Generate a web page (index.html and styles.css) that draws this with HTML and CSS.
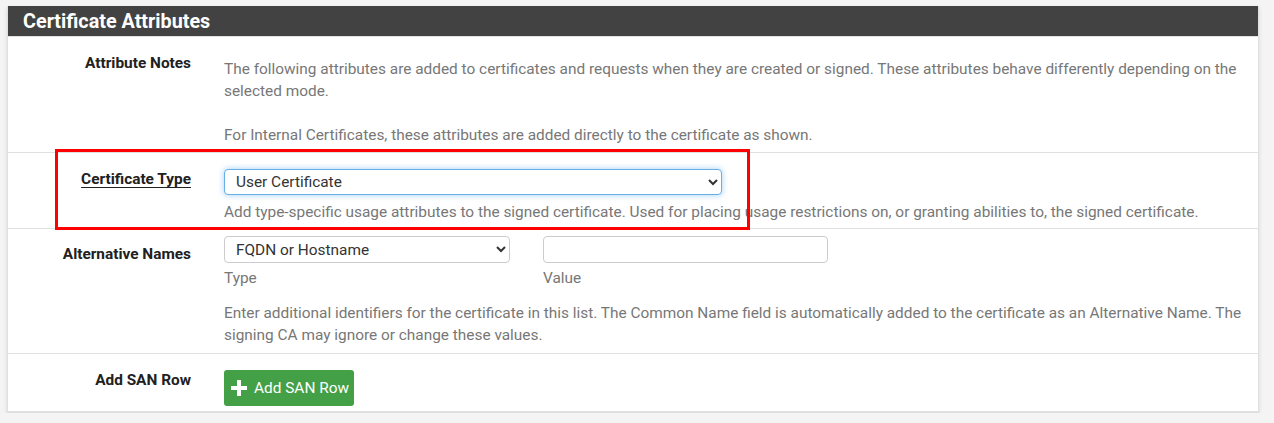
FILE: index.html
```html
<!DOCTYPE html>
<html>
<head>
<meta charset="utf-8">
<link rel="stylesheet" href="styles.css">
</head>
<body>
<div class="panel">
  <div class="panel-heading">Certificate Attributes</div>
  <div class="row row-notes">
    <div class="label">Attribute Notes</div>
    <div class="control">
      <div class="notes">The following attributes are added to certificates and requests when they are created or signed. These attributes behave differently depending on the selected mode.<br><br>For Internal Certificates, these attributes are added directly to the certificate as shown.</div>
    </div>
  </div>
  <div class="row row-type">
    <div class="label"><span class="underline">Certificate Type</span></div>
    <div class="control">
      <select class="select select-wide focused"><option>User Certificate</option></select>
      <div class="help">Add type-specific usage attributes to the signed certificate. Used for placing usage restrictions on, or granting abilities to, the signed certificate.</div>
    </div>
  </div>
  <div class="row row-san">
    <div class="label">Alternative Names</div>
    <div class="control">
      <div class="san-fields">
        <div class="san-col">
          <select class="select"><option>FQDN or Hostname</option></select>
          <div class="sub">Type</div>
        </div>
        <div class="san-col">
          <input class="input" type="text">
          <div class="sub">Value</div>
        </div>
      </div>
      <div class="help help-san">Enter additional identifiers for the certificate in this list. The Common Name field is automatically added to the certificate as an Alternative Name. The signing CA may ignore or change these values.</div>
    </div>
  </div>
  <div class="row row-add">
    <div class="label">Add SAN Row</div>
    <div class="control">
      <button class="btn-add"><svg class="plus" width="16" height="16" viewBox="0 0 16 16"><rect x="6" y="0" width="4" height="16" fill="#fff"/><rect x="0" y="6" width="16" height="4" fill="#fff"/></svg>Add SAN Row</button>
    </div>
  </div>
  <div class="annotation"></div>
</div>
</body>
</html>
```
FILE: styles.css
```css
* { box-sizing: border-box; }
html, body { margin: 0; }
body {
  background: #f4f4f4;
  padding: 6px 15px 0 7px;
  font-family: Roboto, "Liberation Sans", sans-serif;
  font-size: 15.4px;
  color: #212121;
}
.panel {
  position: relative;
  background: #fff;
  border: 1px solid #e0e0e0;
  border-top: none;
  box-shadow: 0 2px 4px rgba(0,0,0,0.12);
}
.panel-heading {
  background: #424242;
  color: #fff;
  font-weight: bold;
  font-size: 19.8px;
  height: 31px;
  line-height: 30px;
  padding-top: 1px;
  padding-left: 15px;
  border-bottom: 1px solid #e0e0e0;
}
.row {
  display: grid;
  grid-template-columns: 183px 1fr;
  column-gap: 33px;
  border-bottom: 1px solid #e0e0e0;
}
.row:last-of-type { border-bottom: none; }
.label {
  text-align: right;
  font-weight: bold;
  line-height: 22px;
  padding-top: 15px;
  color: #212121;
}
.underline {
  text-decoration: underline;
  text-underline-offset: 3px;
}
.control {
  padding-right: 15px;
  color: #777;
  line-height: 22px;
}
.row-notes .control { padding-top: 21px; padding-bottom: 6px; }
.notes { line-height: 22px; }
.row-type .control { padding-top: 16px; padding-bottom: 5px; }
.select {
  display: block;
  height: 27px;
  font-family: Roboto, "Liberation Sans", sans-serif;
  font-size: 15.4px;
  color: #333;
  border: 1px solid #ccc;
  border-radius: 4px;
  background: #fff;
  padding: 0 7px;
}
.select-wide { width: 498px; height: 26px; }
.focused {
  border-color: #66afe9;
  box-shadow: 0 0 6px rgba(102,175,233,0.6);
  outline: none;
}
.help { margin-top: 6px; }
.row-san .label { padding-top: 14px; }
.row-san .control { padding-top: 7px; padding-bottom: 7px; }
.san-fields { display: flex; gap: 33px; }
.san-col { width: 286px; }
.san-col .select { width: 286px; }
.input {
  display: block;
  width: 285px;
  height: 27px;
  border: 1px solid #ccc;
  border-radius: 4px;
  background: #fff;
}
.sub { margin-top: 4px; }
.help-san { margin-top: 13px; }
.row-add .label { padding-top: 15px; }
.row-add .control { padding-top: 16px; padding-bottom: 5px; }
.btn-add {
  display: flex;
  align-items: center;
  gap: 7px;
  height: 36px;
  width: 130px;
  padding: 0 0 0 7px;
  background: #43a047;
  color: #fff;
  border: none;
  border-radius: 3px;
  font-family: Roboto, "Liberation Sans", sans-serif;
  font-size: 15.4px;
}
.plus { flex: none; }
.annotation {
  position: absolute;
  left: 47px;
  top: 143px;
  width: 695px;
  height: 81px;
  border: 3px solid #f00;
  pointer-events: none;
}
```
